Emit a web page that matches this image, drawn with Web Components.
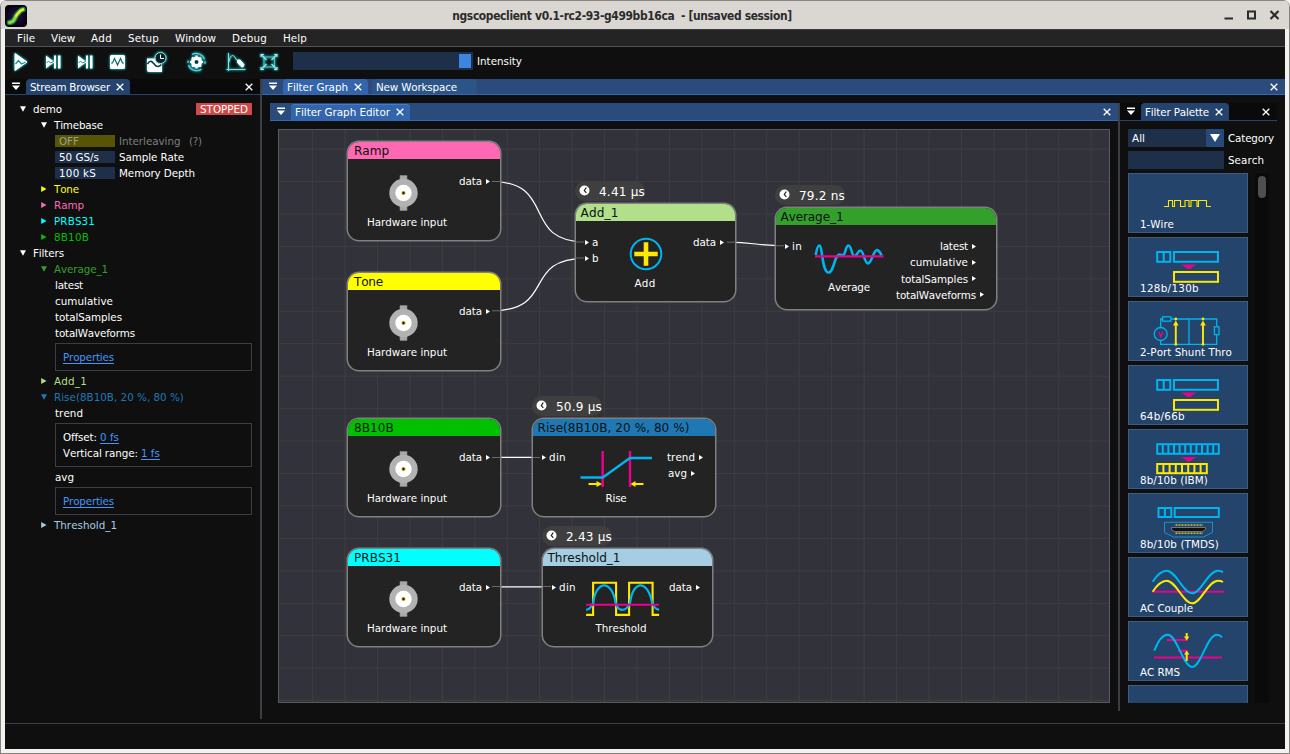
<!DOCTYPE html>
<html lang="en">
<head>
<meta charset="utf-8">
<title>ngscopeclient</title>
<style>
html,body{margin:0;height:100%;overflow:hidden;background:#f4f2f0}
body{font:10.35px/16px "DejaVu Sans",sans-serif;color:#fff}
</style>
</head>
<body>
<scope-window></scope-window>
<script>
const define=(name,css,html,after)=>customElements.define(name,class extends HTMLElement{
  connectedCallback(){
    if(this.shadowRoot)return;
    const r=this.attachShadow({mode:'open'});
    r.innerHTML=`<style>*{box-sizing:border-box}${css}</style>${typeof html==='function'?html(this):html}`;
    if(after)after(this,r);
  }
});
const at=(el,n,d='')=>el.getAttribute(n)??d;

/* ---------- title bar ---------- */
define('title-bar',`
:host{display:flex;height:29px;background:#dad6d2;align-items:center;position:relative;padding:0 9px 0 4px;color:#2b2b2b;border-top:1px solid #8a8683}
.t{flex:1;text-align:center;font:bold 11.9px/20px "DejaVu Sans Condensed","DejaVu Sans",sans-serif;font-stretch:condensed;letter-spacing:-.35px;white-space:pre;padding:2px 7px 0 0}
svg{display:block}
.app{margin-top:1px}`,
`<svg class="app" width="22" height="22" viewBox="0 0 22 22"><defs><radialGradient id="g"><stop offset="0" stop-color="#2d1048"/><stop offset="1" stop-color="#06030f"/></radialGradient></defs>
<rect width="22" height="22" rx="4" fill="url(#g)"/><path d="M4.500 17.500C10 17.500 9.500 12 12 9.500S15 5 18 4.500" fill="none" stroke="#1d7a55" stroke-width="5.500" stroke-linecap="round"/><path d="M4.500 17.500C10 17.500 9.500 12 12 9.500S15 5 18 4.500" fill="none" stroke="#8fdc2c" stroke-width="3" stroke-linecap="round"/><path d="M11 11C13 8 15 5 18 4.500" fill="none" stroke="#f2ee1e" stroke-width="2" stroke-linecap="round"/></svg>
<div class="t">ngscopeclient v0.1-rc2-93-g499bb16ca  - [unsaved session]</div>
<svg width="56" height="12" viewBox="0 0 56 12" fill="none" stroke="#2b2b2b"><path d="M.5 9.500h8.500" stroke-width="2"/><rect x="24" y="2.500" width="7" height="7" stroke-width="2"/><path d="M46.500 2l8 8M54.500 2l-8 8" stroke-width="2.200"/></svg>`);

/* ---------- menu ---------- */
define('menu-bar',`
:host{display:flex;height:18px;background:#242424;border-top:1px solid #3a3a40;border-bottom:1px solid #505058;padding-left:12px;gap:16px;line-height:17px}`,
`<slot></slot>`);

/* ---------- toolbar ---------- */
const tools={
play:'<path d="M2 1.500L14 10 2 18.500z" fill="#fff" stroke="#fff" stroke-linejoin="round"/><path d="M2.500 12l3-3.500 3 3.500 4-2" stroke="#1c8f90" fill="none" stroke-width="1.300"/>',
step:'<path d="M1 3.500L9.500 10 1 16.500z" fill="#fff"/><path d="M1.500 11l2-2 2 2 3-1.500" stroke="#1c8f90" fill="none"/><path d="M9 3.500h2v13H9zM13 3.500h2.500v13H13z" fill="#fff"/>',
wave:'<rect x="1" y="3" width="15" height="14" rx="1.500" fill="#fff"/><path d="M2 11h1.500l2-4.500 3 6.500 3-6.500 2 4.500h1.500" stroke="#106a6c" fill="none" stroke-width="1.200"/>',
hist:'<path d="M1 6.500h9v4h6V20H3a2 2 0 0 1-2-2z" fill="#fff"/><path d="M1.500 12c3-5 5-2 7 .5s4 3 7 0" stroke="#0d3f42" stroke-width="1.600" fill="none"/><circle cx="14.500" cy="6" r="5.500" fill="#0b2224" stroke="#8fe6e6" stroke-width="1"/><path d="M14.500 2.500V6.500h3.500" stroke="#fff" fill="none"/>',
gear:'<circle cx="9.500" cy="10" r="3.800" fill="none" stroke="#fff" stroke-width="3.600"/><g stroke="#fff" stroke-width="2.200"><path d="M9.500 3.500v2M9.500 14.500v2M3 10h2M14 10h2M5 5.500l1.500 1.500M12.500 13l1.500 1.500M14 5.500l-1.500 1.500M6.500 13L5 14.500"/></g><circle cx="9.500" cy="10" r="1.800" fill="#0b3234"/><path d="M5 2.500a8.700 8.700 0 0 1 12.500 5M14.500 17.300A8.700 8.700 0 0 1 1.500 13M1 11V8.500M18 9v3" stroke="#5fd6d6" fill="none" stroke-width="1.100"/>',
trig:'<path d="M2.500 1v18M.5 17.500h19" stroke="#7fdede" fill="none"/><path d="M2.500 11C5 1 7.500 2 10.500 8" stroke="#9fe6e6" fill="none"/><path d="M11.500 8l2.500 0 4 4.500-1 2.500-2-.500-3.500-4z" fill="#fff" stroke="#fff"/>',
fit:'<rect x="4" y="5" width="10.500" height="10" fill="none" stroke="#4fc6c6" stroke-width="1"/><path d="M1 5V2.500h3M14 2.500H17V5M17 15v2.500h-3M4 17.500H1V15M1.500 3l5 5M16.500 3l-5 5M16.500 17l-5-5M1.500 17l5-5" fill="none" stroke="#9fe6e6" stroke-width="1.100"/>'};
define('tool-icon',`:host{display:block;width:20px;height:20px;flex:none;filter:drop-shadow(0 0 1px #1fb0b4) drop-shadow(0 0 1px #0b7c80)}svg{display:block;overflow:visible}`,
el=>`<svg width="20" height="20" viewBox="0 0 20 20">${tools[at(el,'kind')]}</svg>`);
define('tool-bar',`
:host{display:flex;height:32px;background:#0f0f0f;padding:5px 0 0 8px;align-items:flex-start}
.s{width:180px;height:18px;background:#1e2f4a;margin:0 4px 0 0;padding:2px 2px;display:flex;justify-content:flex-end}
.s i{width:12px;height:14px;background:#3d85e0}
.l{line-height:19px}`,
`<tool-icon kind="play"></tool-icon><tool-icon kind="step" style="margin-left:12px"></tool-icon><tool-icon kind="step" style="margin-left:12px"></tool-icon><tool-icon kind="wave" style="margin-left:12px"></tool-icon><tool-icon kind="hist" style="margin-left:17px"></tool-icon><tool-icon kind="gear" style="margin-left:21px"></tool-icon><tool-icon kind="trig" style="margin-left:19px"></tool-icon><tool-icon kind="fit" style="margin-left:14px"></tool-icon><div class="s" style="margin-left:13px"><i></i></div><div class="l">Intensity</div>`);

/* ---------- dock tab strip ---------- */
define('close-x',`:host{display:block;width:8px;height:8px;flex:none}svg{display:block}`,
`<svg width="8" height="8" viewBox="0 0 8 8"><path d="M.7.7l6.600 6.600M7.300.7L.7 7.300" stroke="#fff" stroke-width="1.300"/></svg>`);
define('dock-tab',`
:host{display:flex;align-items:center;gap:6px;padding:0 6px 0 4px;border-radius:4px 4px 0 0;background:var(--tab);white-space:nowrap;line-height:14px}`,
el=>`<slot></slot>${el.hasAttribute('closable')?'<close-x></close-x>':''}`);
define('dock-bar',`
:host{display:flex;align-items:stretch;background:var(--bar);border-bottom:1px solid var(--line);flex:none}
:host([hot]){--bar:#2a4b7c;--tab:#3265ac;--line:#3068b5}
:host([cold]){--bar:#0a0a0a;--tab:#24446f;--line:#24446f}
.m{width:8px;align-self:center;margin:0 6px 0 7px}
svg{display:block}
.tabs{display:flex;gap:4px;padding-left:0}
close-x{margin:0 7px 0 auto;align-self:center}`,
`<svg class="m" width="8" height="9" viewBox="0 0 8 9"><path d="M0 .5h8v1.500H0zM0 3.500h8L4 8z" fill="#fff"/></svg><div class="tabs"><slot></slot></div><close-x></close-x>`);

/* ---------- stream browser ---------- */
define('tree-row',`
:host{display:flex;height:16px;align-items:center;padding-left:var(--in,15px);color:var(--c,#fff);white-space:nowrap}
svg{width:6px;height:6px;margin-right:7px;flex:none}
.b{margin-left:auto}`,
el=>{const s=at(el,'open');return (s==='1'?'<svg viewBox="0 0 6 6"><path d="M0 .3h6L3 5.800z" fill="currentColor"/></svg>':s==='0'?'<svg viewBox="0 0 6 6"><path d="M.2 0v6L5.500 3z" fill="currentColor"/></svg>':'')+'<slot></slot><span class="b"><slot name="end"></slot></span>'});
define('field-row',`
:host{display:flex;height:16px;align-items:center;padding-left:50px;gap:4px;color:#fff}
b{font-weight:normal;width:60px;height:12px;line-height:12px;background:#1e2f4a;padding-left:4px}
:host([off]){color:#7f7f7f}:host([off]) b{background:#555505;color:#a0a088}`,
el=>`<b>${at(el,'value')}</b><span><slot></slot></span>`);
define('prop-box',`
:host{display:block;margin:2px 8px 2px 50px;border:1px solid #3c3c44;padding:5px 7px 5px}
::slotted(div){height:16px}`,`<slot></slot>`);
define('prop-link',`:host{color:#4296fa;text-decoration:underline;text-underline-offset:1.500px}`,`<slot></slot>`);
define('stream-browser',`
:host{display:flex;flex-direction:column;width:255px;background:#0f0f0f}
.tree{padding-top:6px}
.st{background:#d04848;height:12px;line-height:12px;padding:0 4px;display:block;margin:0 8px 0 0}
.l2{--in:36px}.leaf{--in:50px}`,
`<dock-bar cold style="height:16px"><dock-tab closable>Stream Browser</dock-tab></dock-bar>
<div class="tree">
<tree-row open="1">demo<span slot="end" class="st">STOPPED</span></tree-row>
<tree-row open="1" class="l2">Timebase</tree-row>
<field-row off value="OFF">Interleaving &nbsp;<span style="margin-left:2px">(?)</span></field-row>
<field-row value="50 GS/s">Sample Rate</field-row>
<field-row value="100 kS">Memory Depth</field-row>
<tree-row open="0" class="l2" style="--c:#ffff00">Tone</tree-row>
<tree-row open="0" class="l2" style="--c:#ff69b4">Ramp</tree-row>
<tree-row open="0" class="l2" style="--c:#00ffff">PRBS31</tree-row>
<tree-row open="0" class="l2" style="--c:#00c000">8B10B</tree-row>
<tree-row open="1">Filters</tree-row>
<tree-row open="1" class="l2" style="--c:#33a02c">Average_1</tree-row>
<tree-row class="leaf">latest</tree-row><tree-row class="leaf">cumulative</tree-row><tree-row class="leaf">totalSamples</tree-row><tree-row class="leaf">totalWaveforms</tree-row>
<prop-box><div><prop-link>Properties</prop-link></div></prop-box>
<tree-row open="0" class="l2" style="--c:#b2df8a">Add_1</tree-row>
<tree-row open="1" class="l2" style="--c:#1f78b4">Rise(8B10B, 20 %, 80 %)</tree-row>
<tree-row class="leaf">trend</tree-row>
<prop-box><div>Offset: <prop-link>0 fs</prop-link></div><div>Vertical range: <prop-link>1 fs</prop-link></div></prop-box>
<tree-row class="leaf">avg</tree-row>
<prop-box><div><prop-link>Properties</prop-link></div></prop-box>
<tree-row open="0" class="l2" style="--c:#a6cee3">Threshold_1</tree-row>
</div>`);

/* ---------- filter graph ---------- */
const B='#00b4ee',Y='#ffe800',M='#ec008c';
const art={
hw:'<g transform="translate(.8 0)"><path d="M38 6.500h7v35h-7z" transform="translate(-3.800 -2)" fill="#a8a8a8" stroke="#8a8a8a" stroke-width=".6"/><circle cx="37.700" cy="22" r="14.200" fill="#b2b2b2"/><circle cx="37.700" cy="22" r="8.200" fill="#fff"/><circle cx="37.700" cy="22" r="2" fill="#c8a000"/><circle cx="37.700" cy="22" r="1.200" fill="#222"/></g>',
add:`<circle cx="43" cy="22" r="15.300" fill="none" stroke="${B}" stroke-width="2"/><path d="M43 10.300v23.400M31.300 22h23.400" stroke="${Y}" stroke-width="4.600"/>`,
avg:`<path d="M8.800 19C10 11.500 11 9.500 12.300 9.500C15.500 9.500 15 36.500 21.500 36.500C27 36.500 27.500 18.500 32.500 18.500C34 18.500 34 19.500 36 19.500C39 17.500 38.500 9.500 41.500 9.500S44.500 20 47.500 20S50.500 14.500 53.500 14.500S57.500 27.500 61 27.500S66.500 14 70 14Q73 15 74.500 19.500" fill="none" stroke="${B}" stroke-width="2.600"/><path d="M8 20.300h68.500" stroke="${M}" stroke-width="2.200"/>`,
rise:`<path d="M28.700 4v36M56 4v36" stroke="${M}" stroke-width="2.400"/><path d="M6.500 30.500H28.700L56 11H78" fill="none" stroke="${B}" stroke-width="2.400"/><path d="M14.500 37h9M69.500 37h-9" stroke="${Y}" stroke-width="2"/><path d="M22.500 34l5.500 3-5.500 3zM61.500 34L56.500 37l5 3z" fill="${Y}"/>`,
thr:`<g transform="translate(.6 -.6)"><path d="M6.500 38.500H13.500V6.300H36.500V38.500H49.500V6.300H73V38.500H79.500" fill="none" stroke="${Y}" stroke-width="2.100"/><path d="M6.500 33.500Q11 33 13.500 26.500C17 3 32 3 36 26.500Q38 33.500 42.500 33.500Q47.500 33.500 50.500 26.500C53.500 3 68 3 72.500 26.500Q74.500 32.500 79.500 33.500" fill="none" stroke="${B}" stroke-width="2.200"/><path d="M6.500 28.300H79.500" stroke="${M}" stroke-width="2"/></g>`};
define('graph-port',`
:host{display:flex;height:16.250px;align-items:center;gap:3px;white-space:nowrap}
:host([out]){flex-direction:row-reverse;justify-content:flex-start;gap:4px}
svg{width:4px;height:5px;display:block;flex:none}`,
`<svg viewBox="0 0 4 5"><path d="M0 0v5L4 2.500z" fill="#fff"/></svg><span><slot></slot></span>`);
define('graph-node',`
:host{position:absolute}
.n{width:100%;height:100%;border-radius:11px;box-shadow:0 0 0 1.500px #808080;background:#232324;overflow:hidden;display:flex;flex-direction:column}
.h{height:17px;background:var(--c);color:#0c1210;font-size:12.1px;line-height:19px;padding-left:var(--tp,4.500px);white-space:nowrap}
.b{flex:1;display:grid;grid-template-columns:var(--l) 84px 1fr;padding-top:var(--dy,0px)}
.i{padding:13px 0 0 9px}.o{padding:13px 0 0}
.m{padding-top:11px;text-align:center;white-space:nowrap;line-height:16.500px}
.m svg{display:block;overflow:visible}
.t{position:absolute;left:-1px;top:-23px;width:70px;height:20px;border-radius:10px;background:#3f3f40;display:flex;align-items:center;gap:9px;padding:2px 0 0 4px;font-size:12.1px;white-space:nowrap}
.t svg{flex:none;margin-top:-3px}`,
el=>`${at(el,'time')?`<div class="t"><svg width="11" height="11" viewBox="0 0 11 11"><circle cx="5.500" cy="5.500" r="5" fill="#fff"/><path d="M7.300 2.500L5.300 5.500l2 2.300" stroke="#222" stroke-width="1.200" fill="none"/></svg>${at(el,'time')}</div>`:''}
<div class="n"><div class="h">${at(el,'name')}</div><div class="b"><div class="i"><slot name="in"></slot></div><div class="m"><svg width="84" height="43" viewBox="0 0 84 43">${art[at(el,'art')]}</svg>${at(el,'kind')}</div><div class="o"><slot name="out"></slot></div></div></div>`,
(el)=>{const [x,y,w,h,l]=at(el,'box').split(' ');el.style.cssText+=`;left:${x-279}px;top:${y-130}px;width:${w}px;height:${h}px;--l:${l}px;--c:${at(el,'color')};--tp:${at(el,'art')==='hw'?6:4.5}px`});
define('graph-canvas',`
:host{display:block;position:relative;flex:1;margin:8px;border:1px solid #5a5a62;overflow:hidden;background:#32323a}
.w{position:absolute;inset:0}
graph-port[out]{padding-right:10px}`,
()=>{let g='';for(let i=0;i<27;i++)g+=`<path d="M${(312.600+i*32.440-279).toFixed(2)} 0v580"/>`;for(let i=0;i<18;i++)g+=`<path d="M0 ${(149.100+i*32.440-130).toFixed(2)}h840"/>`;
const p=(d)=>`<path d="${d}"/>`;
const dim='M492 181.500h9M492 310.800h9M576 242h8M576 258h8M727 242.200h9M776 245.800h8M492 457.500h9M533 457.500h7M492 586.500h9M543 586.500h8';
return `<svg class="w" width="830" height="572"><g stroke="#3e3e42" stroke-width="1">${g}</g><g transform="translate(-279 -130)" fill="none" stroke="#fff" stroke-width="1.200">${p('M491 181.500C558 181.500 520 242 586 242')}${p('M491 310.800C558 310.800 520 258.300 586 258.300')}${p('M727 242.200C755 242.200 757 245.800 785 245.800')}${p('M491 457.300H541')}${p('M491 586.800H551')}</g></svg>
<graph-node box="348 142 152 98 17" color="#ff69b4" name="Ramp" art="hw" kind="Hardware input" style="--dy:1px"><graph-port slot="out" out>data</graph-port></graph-node>
<graph-node box="348 273 152 97 17" color="#ffff00" name="Tone" art="hw" kind="Hardware input"><graph-port slot="out" out>data</graph-port></graph-node>
<graph-node box="576 204 159 97 27" color="#b2df8a" name="Add_1" art="add" kind="Add" time="4.41 µs"><graph-port slot="in">a</graph-port><graph-port slot="in">b</graph-port><graph-port slot="out" out style="padding-right:11px">data</graph-port></graph-node>
<graph-node box="776 208 220 101 31" color="#33a02c" name="Average_1" art="avg" kind="Average" time="79.2 ns"><graph-port slot="in">in</graph-port><graph-port slot="out" out style="padding-right:20px">latest</graph-port><graph-port slot="out" out style="padding-right:20px">cumulative</graph-port><graph-port slot="out" out style="padding-right:20px">totalSamples</graph-port><graph-port slot="out" out style="padding-right:12px">totalWaveforms</graph-port></graph-node>
<graph-node box="348 419 152 97 17" color="#00c000" name="8B10B" art="hw" kind="Hardware input"><graph-port slot="out" out>data</graph-port></graph-node>
<graph-node box="533 419 182 97 41" color="#1f78b4" name="Rise(8B10B, 20 %, 80 %)" art="rise" kind="Rise" time="50.9 µs"><graph-port slot="in">din</graph-port><graph-port slot="out" out style="padding-right:12px">trend</graph-port><graph-port slot="out" out style="padding-right:20px">avg</graph-port></graph-node>
<graph-node box="348 549 152 97 17" color="#00ffff" name="PRBS31" art="hw" kind="Hardware input"><graph-port slot="out" out>data</graph-port></graph-node>
<graph-node box="543 549 169 97 36" color="#a6cee3" name="Threshold_1" art="thr" kind="Threshold" time="2.43 µs"><graph-port slot="in">din</graph-port><graph-port slot="out" out style="padding-right:12px">data</graph-port></graph-node>
<svg class="w" width="830" height="572"><path transform="translate(-279 -130)" d="${dim}" stroke="#6a6a6a" stroke-width="1" fill="none"/></svg>`});

/* ---------- filter palette ---------- */
const boxes=(x0,x1,y0,y1,n,c)=>{let s=`<rect x="${x0}" y="${y0}" width="${x1-x0}" height="${y1-y0}"/>`;for(let i=1;i<n;i++){const x=x0+(x1-x0)*i/n;s+=`<path d="M${x} ${y0}V${y1}"/>`}return `<g fill="none" stroke="${c}" stroke-width="2">${s}</g>`};
const tri=`<path d="M53 27.500h15.500l-7.800 5z" fill="${M}"/>`;
const enc=boxes(29.200,42.300,15,24.800,2,B)+boxes(46,90,15,24.800,1,B)+tri+boxes(46,90,35,44.800,1,Y);
const pal={
wire:`<path d="M36 33.500H40.500V27.500H44.500V33.500H46.500V27.500H52.500V33.500H57V27.500H61V33.500H63V27.500H69V33.500H70.500V27.500H78.500V33.500H83" fill="none" stroke="${Y}" stroke-width="1.100"/>`,
enc,
shunt:`<g fill="none" stroke="${B}" stroke-width="1.300"><circle cx="32.700" cy="33" r="6.500"/><path d="M32.700 26.500V18H35M43 18H88.700V25.600M88.700 33.500V43.300H32.700V39.500M61 18V43.300"/><rect x="34.600" y="15.800" width="8.200" height="4.400"/><rect x="86.400" y="25.800" width="4.600" height="7.800"/></g><path d="M30.800 31l2 4.500 2-4.500" fill="none" stroke="${M}" stroke-width="1.400"/><path d="M47.800 43V22M75 43V22" stroke="${Y}" stroke-width="1.900"/><path d="M45 24.500l2.800-5 2.800 5zM72.200 24.500l2.800-5 2.800 5z" fill="${Y}"/><g fill="${Y}"><circle cx="47.800" cy="18" r="1.400"/><circle cx="75" cy="18" r="1.400"/><circle cx="47.800" cy="43.300" r="1.400"/><circle cx="75" cy="43.300" r="1.400"/></g>`,
ibm:boxes(29.200,90.800,15.200,24.800,11,B)+`<g transform="translate(0 .5)">${tri}</g>`+boxes(29.200,78.800,35,44.200,8,Y),
tmds:boxes(30.500,43.300,15,24,2,B)+boxes(46.700,90.800,15,24,1,B)+`<path d="M36.500 29.300H84.500V39.500L75.500 44H45.500L36.500 39.500z" fill="none" stroke="#1a93cc" stroke-width="1"/><path d="M43.500 34.500H77.500V36.500L74.500 38.500H46.500L43.500 36.500z" fill="#111" stroke="#888" stroke-width=".8"/><path d="M47.500 32H75M47.500 40.300H75" stroke="#c9c02a" stroke-width="1.500" stroke-dasharray="2 1"/>`,
acc:`<path d="M24.700 34.700H96" stroke="${M}" stroke-width="2"/><path d="M24.700 24.700C29 18 33 13.700 38.700 13.700C48 13.700 55 36.300 64.300 36.300C73 36.300 80 13.700 90 13.700Q93 13.700 95 15.300" fill="none" stroke="${B}" stroke-width="2"/><path d="M24.700 34.700C29 28 33 23.700 38.700 23.700C48 23.700 55 46.300 64.300 46.300C73 46.300 80 23.700 90 23.700Q93 23.700 95 25" fill="none" stroke="${Y}" stroke-width="2"/>`,
rms:`<path d="M26 36.500H94M39 19H60M50 29.800H60" stroke="${M}" stroke-width="2.200"/><path d="M26.300 29.700C30 20 34 13.700 39.700 13.700C49 13.700 55 46 64.300 46C73 46 79 13.700 89 13.700Q92 13.700 94 16.300" fill="none" stroke="${B}" stroke-width="2"/><path d="M58.700 12v5M58.700 40v-8" stroke="${Y}" stroke-width="2"/><path d="M56 15.500h5.400l-2.700 4zM56 33.500h5.400l-2.700-4z" fill="${Y}"/>`,
none:''};
define('palette-item',`
:host{display:flex;position:relative;height:60px;flex:none;background:#24446c;border:1px solid #405a80;align-items:flex-end;padding:0 0 0 11px;overflow:hidden}
svg{position:absolute;left:-1px;top:-1px}
span{position:relative;line-height:15px}`,
el=>`<svg width="120" height="60" viewBox="0 0 120 60">${pal[at(el,'art')]}</svg><span><slot></slot></span>`);
define('filter-palette',`
:host{display:flex;flex-direction:column;flex:1;min-height:0}
.f{display:flex;height:18px;margin:0 0 4px 8px;gap:4px;line-height:19px;white-space:nowrap}
.c{width:96px;background:#1e2f4a;padding-left:4px;display:flex;justify-content:space-between}
.c i{width:18px;background:#24497a;display:flex;align-items:center;justify-content:center}
.list{display:flex;flex:1;min-height:0;overflow:hidden;margin:0 0 0 8px}
.items{width:120px;display:flex;flex-direction:column;gap:4px}
.sb{width:14px;background:#0a0a0a;margin-left:7px;padding:3px}
.sb i{display:block;height:22px;border-radius:4px;background:#4f4f4f}`,
`<dock-bar cold style="height:18px;margin-bottom:8px;margin-right:8px"><dock-tab closable style="line-height:16px">Filter Palette</dock-tab></dock-bar>
<div class="f"><div class="c">All<i><svg width="10" height="8"><path d="M0 0h10L5 8z" fill="#fff"/></svg></i></div>Category</div>
<div class="f"><div class="c"></div>Search</div>
<div class="list"><div class="items">
<palette-item art="wire">1-Wire</palette-item><palette-item art="enc">128b/130b</palette-item><palette-item art="shunt">2-Port Shunt Thro</palette-item><palette-item art="enc">64b/66b</palette-item><palette-item art="ibm">8b/10b (IBM)</palette-item><palette-item art="tmds">8b/10b (TMDS)</palette-item><palette-item art="acc">AC Couple</palette-item><palette-item art="rms">AC RMS</palette-item><palette-item art="none"></palette-item>
</div><div class="sb"><i></i></div></div>`);

/* ---------- window ---------- */
define('scope-window',`
:host{box-sizing:border-box;display:flex;flex-direction:column;width:1290px;height:754px;border:1px solid #85817e;border-top:0;border-radius:7px 7px 0 0;overflow:hidden;background:#f4f2f0}
.body{flex:1;margin:0 4px 4px;display:flex;flex-direction:column;background:#0f0f0f;min-height:0}
.dock{display:flex;height:640px;flex:none}
.split{width:2px;background:#3d3d46;flex:none}
.ws{flex:1;display:flex;flex-direction:column;min-width:0}
.in{display:flex;padding:8px 0 0 8px;height:616px}
.ed{display:flex;flex-direction:column;width:848px}
.pal{display:flex;width:165px;height:600px}
.in .split{height:608px}
.status{margin-top:4px;border-top:1px solid #3d3d46;flex:1}`,
`<title-bar></title-bar>
<div class="body">
<menu-bar><span>File</span><span>View</span><span>Add</span><span>Setup</span><span>Window</span><span>Debug</span><span>Help</span></menu-bar>
<tool-bar></tool-bar>
<div class="dock"><stream-browser></stream-browser><div class="split"></div>
<div class="ws"><dock-bar hot style="height:16px"><dock-tab closable>Filter Graph</dock-tab><dock-tab style="--tab:#2b5489;padding-right:20px">New Workspace</dock-tab></dock-bar>
<div class="in"><div class="ed"><dock-bar hot style="height:18px"><dock-tab closable style="box-shadow:inset 0 1px #3d7cd0;margin-top:1px;line-height:16px">Filter Graph Editor</dock-tab></dock-bar><graph-canvas></graph-canvas></div><div class="split"></div><div class="pal"><filter-palette></filter-palette></div></div></div></div>
<div class="status"></div>
</div>`);

/* Give every label the width it has with whole-pixel glyph advances. */
const ctx=document.createElement('canvas').getContext('2d');
ctx.font='100px "DejaVu Sans",sans-serif';
const fitText=root=>{
  if(root.host?.localName==='title-bar')return;
  for(const n of [...root.childNodes]){
    if(n.nodeType===3){
      if(!n.data.trim())continue;
      const size=parseFloat(getComputedStyle(n.parentElement||root.host).fontSize);
      const chars=[...n.data];let want=0,have=0;
      for(const c of chars){const w=ctx.measureText(c).width/100*size;have+=w;want+=Math.round(w)}
      const s=document.createElement('span');
      s.style.letterSpacing=((want-have)/chars.length).toFixed(3)+'px';
      s.style.fontKerning='none';
      n.replaceWith(s);s.append(n);
    }else if(n.nodeType===1&&n.localName!=='style'&&n.localName!=='svg'){
      fitText(n);if(n.shadowRoot)fitText(n.shadowRoot);
    }
  }
};
fitText(document.querySelector('scope-window').shadowRoot);
</script>
</body>
</html>
